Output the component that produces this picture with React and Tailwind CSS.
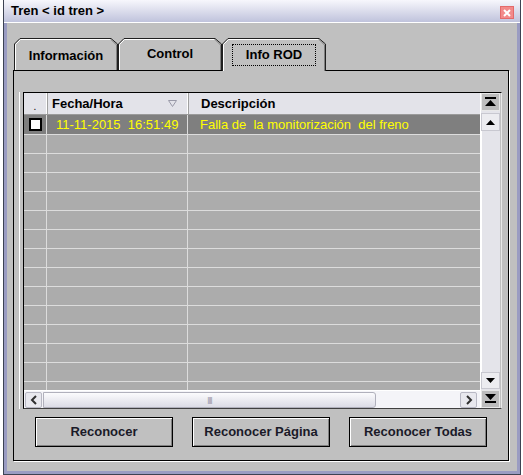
import React from "react";

const rows = Array.from({ length: 14 });

function Tab({ label, active, offset }) {
  const h = active ? 33 : 32;
  const w = 104;
  return (
    <div className={`relative w-[104px] ${active ? "h-[33px] z-10 bg-[#c0c0c0]" : "h-[32px]"} flex justify-center`}>
      <svg className="absolute left-0 top-0" width={w} height={h}>
        <path d={`M0.5,${h} V6 L6,0.5 H${w - 7} L${w - 0.5},6 V${h}`} fill="#c0c0c0" stroke="#202020" />
        <path d={`M1.5,${h} V6.5 L6.5,1.5 H${w - 7.5}`} fill="none" stroke="#ffffff" />
        <path d={`M${w - 7},1.5 L${w - 1.5},7 V${h}`} fill="none" stroke="#808080" />
      </svg>
      {active ? (
        <span className="relative mt-[6px] h-[22px] px-[13px] border border-dotted border-black flex items-center font-bold">{label}</span>
      ) : (
        <span className={`relative font-bold ${offset ? "mt-[8px]" : "mt-[6px]"}`}>{label}</span>
      )}
    </div>
  );
}

// small arrow drawings for the scroll buttons
function Tri({ down }) {
  return (
    <svg width="9" height="5">
      <path d={down ? "M0,0 H9 L4.5,5 Z" : "M0,5 H9 L4.5,0 Z"} fill="#000" />
    </svg>
  );
}

function TriBar({ down }) {
  return (
    <svg width="11" height="10">
      {down ? (
        <>
          <path d="M0,0 H11 L5.5,6 Z" fill="#000" />
          <rect x="0" y="7" width="11" height="2" fill="#000" />
        </>
      ) : (
        <>
          <rect x="0" y="0" width="11" height="2" fill="#000" />
          <path d="M0,9 H11 L5.5,3 Z" fill="#000" />
        </>
      )}
    </svg>
  );
}

function Chevron({ right }) {
  return (
    <svg width="8" height="10">
      <path d={right ? "M2,1 L6,5 L2,9" : "M6,1 L2,5 L6,9"} fill="none" stroke="#303030" strokeWidth="2" />
    </svg>
  );
}

function Btn({ children }) {
  return (
    <button className="w-[138px] h-[30px] border border-black bg-[#c0c0c0] shadow-[inset_1px_1px_0_#fff,inset_-1px_-1px_0_#808080] font-bold text-[13px] text-[#1a1a28]">
      {children}
    </button>
  );
}

export default function App() {
  return (
    <div className="w-[523px] h-[475px] bg-white pl-[3px] font-['Liberation_Sans',Arial,sans-serif] text-[13px] text-black">
      <div className="w-[518px] h-[475px] flex flex-col border-l border-r border-b border-[#3c4252]">
        {/* title bar */}
        <div className="h-[23px] flex items-center justify-between pl-[7px] pr-[6px] border-b border-white bg-gradient-to-b from-[#f7f7fc] to-[#c0c3dc]">
          <span className="font-bold">Tren &lt; id tren &gt;</span>
          <div className="w-[14px] h-[13px] mt-[3px] bg-[#f28a8a] border border-[#e46a6a] flex items-center justify-center">
            <svg width="8" height="8">
              <path d="M1,1 L7,7 M7,1 L1,7" stroke="#fff" strokeWidth="2" />
            </svg>
          </div>
        </div>

        {/* body */}
        <div className="flex-1 bg-[#c0c0c0] border-l-[3px] border-r-[3px] border-b-[3px] border-[#9a9cc2] flex flex-col">
          <div className="flex h-[32px] mt-[15px] ml-[7px]">
            <Tab label="Información" offset />
            <Tab label="Control" />
            <Tab label="Info ROD" active />
          </div>

          <div className="ml-[6px] w-[496px] h-[391px] border border-black shadow-[1px_1px_0_#fff] flex flex-col">
            {/* grid frame */}
            <div className="ml-[5px] mt-[21px] w-[483px] h-[317px] border-l border-white pl-[3px] flex">
              <div className="flex-1 border-t border-l border-black border-r border-r-[#e8e8e8] border-b border-b-[#404040] flex">
                <div className="w-[456px] flex flex-col">
                  {/* header */}
                  <div className="h-[22px] flex bg-[#e3e3e9] border-b border-[#9a9a9a]">
                    <div className="w-[23px] border-r border-white flex items-end justify-center pb-[2px] text-[10px] leading-none">.</div>
                    <div className="w-[141px] border-r border-white border-l border-l-[#a0a0a0] flex items-center justify-between pl-[4px] pr-[10px] font-bold">
                      <span>Fecha/Hora</span>
                      <svg width="9" height="7">
                        <path d="M0.5,0.5 H8.5 L4.5,6.5 Z" fill="none" stroke="#9a9aa8" />
                      </svg>
                    </div>
                    <div className="flex-1 border-l border-l-[#a0a0a0] flex items-center pl-[12px] font-bold">Descripción</div>
                  </div>
                  {/* rows */}
                  <div className="flex-1 overflow-hidden bg-[#acacac]">
                    <div className="h-[20px] flex bg-[#7f7f7f] border-b border-[#dcdcdc] text-[#ffff00]">
                      <div className="w-[23px] border-r border-[#dcdcdc] flex items-center justify-center">
                        <div className="w-[13px] h-[13px] bg-white border-2 border-black" />
                      </div>
                      <div className="w-[141px] border-r border-[#dcdcdc] flex items-center pl-[9px] whitespace-pre">11-11-2015  16:51:49</div>
                      <div className="flex-1 flex items-center pl-[12px] whitespace-pre">Falla de  la monitorización  del freno</div>
                    </div>
                    {rows.map((_, i) => (
                      <div key={i} className="h-[19px] flex border-b border-[#dcdcdc]">
                        <div className="w-[23px] border-r border-[#dcdcdc]" />
                        <div className="w-[141px] border-r border-[#dcdcdc]" />
                        <div className="flex-1" />
                      </div>
                    ))}
                  </div>
                  {/* horizontal scrollbar */}
                  <div className="h-[18px] flex items-center bg-[#f4f4f8] px-[1px] border-t border-white">
                    <div className="w-[17px] h-[16px] bg-[#e8e8ee] border border-[#b8b8c4] rounded-[2px] flex items-center justify-center">
                      <Chevron />
                    </div>
                    <div className="w-[333px] h-[16px] ml-[1px] bg-gradient-to-b from-[#fbfbfd] to-[#dcdce6] border border-[#b0b0bc] rounded-r-[3px] flex items-center justify-center">
                      <span className="text-[8px] leading-none text-[#9090a0] tracking-[-1px]">||||</span>
                    </div>
                    <div className="flex-1" />
                    <div className="w-[17px] h-[16px] mr-[2px] bg-[#e8e8ee] border border-[#b8b8c4] rounded-[2px] flex items-center justify-center">
                      <Chevron right />
                    </div>
                  </div>
                </div>
                {/* vertical scrollbar */}
                <div className="w-[20px] flex flex-col bg-[#e4e4ea] border-l border-white">
                  <div className="h-[18px] bg-[#bdbdbd] border border-[#e8e8e8] flex items-center justify-center">
                    <TriBar />
                  </div>
                  <div className="h-[18px] mt-[2px] bg-[#ececf0] border border-[#c8c8d0] flex items-center justify-center">
                    <Tri />
                  </div>
                  <div className="flex-1 border-l border-white" />
                  <div className="h-[17px] bg-[#ececf0] border border-[#c8c8d0] flex items-center justify-center">
                    <Tri down />
                  </div>
                  <div className="h-[18px] mt-[1px] bg-[#bdbdbd] border border-[#e8e8e8] flex items-center justify-center">
                    <TriBar down />
                  </div>
                </div>
              </div>
            </div>

            {/* buttons */}
            <div className="flex gap-[19px] ml-[21px] mt-[8px]">
              <Btn>Reconocer</Btn>
              <Btn>Reconocer Página</Btn>
              <Btn>Reconocer Todas</Btn>
            </div>
          </div>
        </div>
      </div>
    </div>
  );
}
